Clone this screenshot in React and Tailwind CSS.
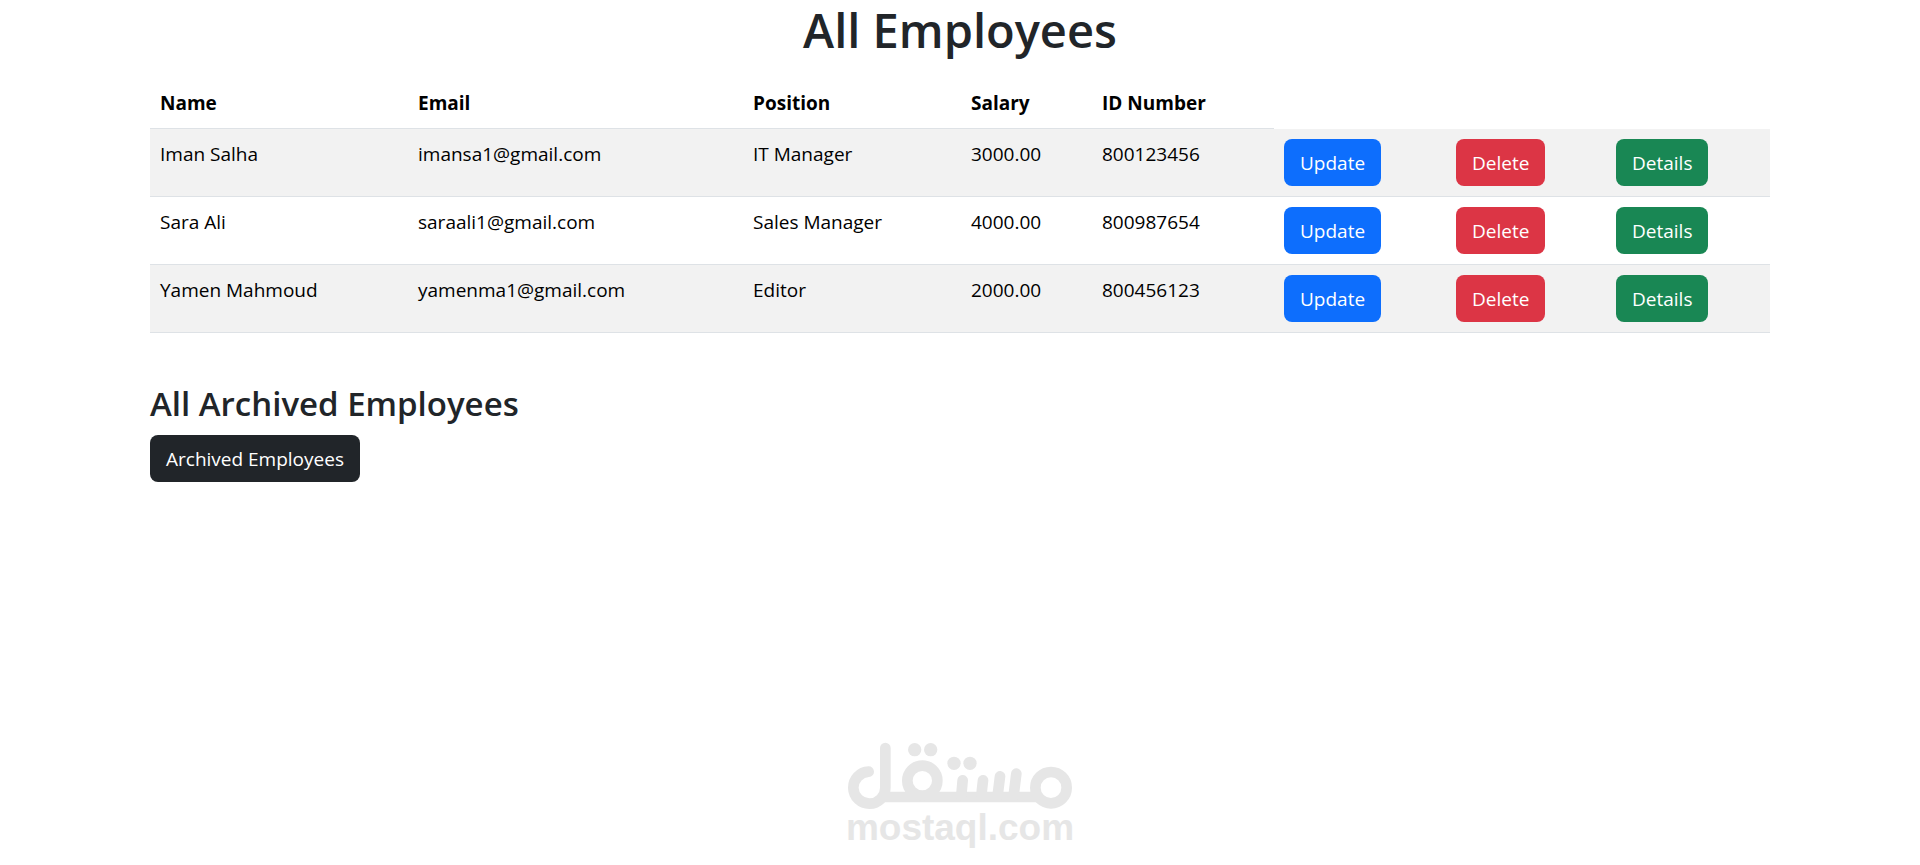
import React from 'react';

const employees = [
  { name: 'Iman Salha', email: 'imansa1@gmail.com', position: 'IT Manager', salary: '3000.00', idNumber: '800123456' },
  { name: 'Sara Ali', email: 'saraali1@gmail.com', position: 'Sales Manager', salary: '4000.00', idNumber: '800987654' },
  { name: 'Yamen Mahmoud', email: 'yamenma1@gmail.com', position: 'Editor', salary: '2000.00', idNumber: '800456123' },
];

const cell = 'p-[10px] align-top border-b border-[#dee2e6]';
const button = 'block h-[47px] px-4 rounded-lg text-white cursor-pointer whitespace-nowrap';

function EmployeeTable() {
  return (
    <table className="w-full table-fixed border-separate border-spacing-0 mb-5 text-black">
      <colgroup>
        <col className="w-[258px]" />
        <col className="w-[335px]" />
        <col className="w-[218px]" />
        <col className="w-[131px]" />
        <col className="w-[182px]" />
        <col className="w-[172px]" />
        <col className="w-[160px]" />
        <col className="w-[164px]" />
      </colgroup>
      <thead>
        <tr className="text-left">
          <th scope="col" className={cell}>Name</th>
          <th scope="col" className={cell}>Email</th>
          <th scope="col" className={cell}>Position</th>
          <th scope="col" className={cell}>Salary</th>
          <th scope="col" className={cell}>ID Number</th>
        </tr>
      </thead>
      <tbody>
        {employees.map((employee) => (
          <tr key={employee.idNumber} className="odd:bg-[#f2f2f2]">
            <td className={cell}>{employee.name}</td>
            <td className={cell}>{employee.email}</td>
            <td className={cell}>{employee.position}</td>
            <td className={cell}>{employee.salary}</td>
            <td className={cell}>{employee.idNumber}</td>
            <td className={cell}>
              <button type="button" className={`${button} bg-[#0d6efd]`}>Update</button>
            </td>
            <td className={cell}>
              <button type="button" className={`${button} bg-[#dc3545]`}>Delete</button>
            </td>
            <td className={cell}>
              <button type="button" className={`${button} bg-[#198754]`}>Details</button>
            </td>
          </tr>
        ))}
      </tbody>
    </table>
  );
}

function Watermark() {
  return (
    <footer className="mt-auto flex flex-col items-center pb-5 text-[#e6e6e6]">
      <svg viewBox="50 40 678 204" className="w-[226px] h-[68px]" fill="none" stroke="currentColor" strokeWidth="32" strokeLinecap="round" aria-hidden="true">
        <path d="M115 129A48 48 0 1 0 165 177V58" />
        <path d="M165 205H622" />
        <circle cx="662" cy="177" r="47" />
        <circle cx="276" cy="156" r="45" />
        <path d="M397 155L393 200M458 155L453 200M509 143L502 200M558 135L550 200" />
        <g fill="currentColor" stroke="none">
          <circle cx="253" cy="63" r="20" />
          <circle cx="301" cy="63" r="20" />
          <circle cx="371" cy="104" r="20" />
          <circle cx="419" cy="104" r="20" />
        </g>
      </svg>
      <span className="font-['Liberation_Sans',sans-serif] font-bold text-[37px] leading-[35px]">mostaql.com</span>
    </footer>
  );
}

export default function App() {
  return (
    <div className="min-h-screen flex flex-col bg-white text-[#212529] font-['Open_Sans',sans-serif] text-[19px] leading-[30px]">
      <main className="w-full max-w-[1650px] mx-auto px-[15px]">
        <h1 className="mb-[18px] text-center text-[47px] leading-[60px] font-semibold">All Employees</h1>
        <EmployeeTable />
        <h3 className="mt-[50px] mb-[10px] text-[33px] leading-[42px] font-semibold">All Archived Employees</h3>
        <button type="button" className={`${button} bg-[#212529]`}>Archived Employees</button>
      </main>
      <Watermark />
    </div>
  );
}
